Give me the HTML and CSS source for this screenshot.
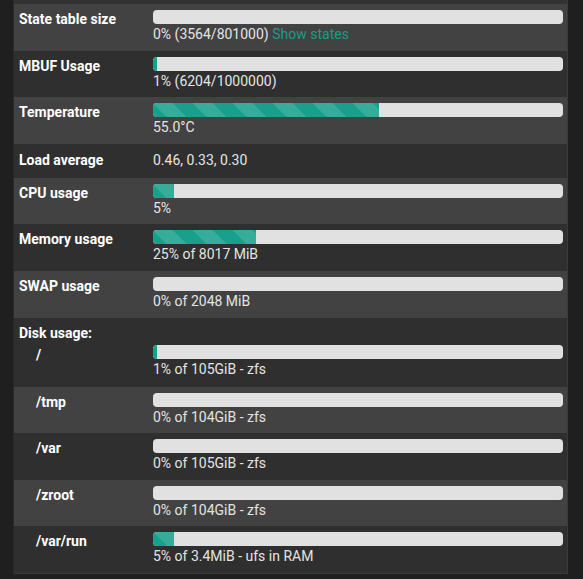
FILE: index.html
```html
<!DOCTYPE html>
<html>
<head>
<meta charset="utf-8">
<link rel="stylesheet" href="styles.css">
</head>
<body>
<div class="panel">
  <div class="panel-top"></div>
  <table class="sysinfo">
    <tbody>
      <tr class="light">
        <th>State table size</th>
        <td>
          <div class="progress"><div class="bar" style="width:0%"></div></div>
          <span class="val">0% (3564/801000) <a class="link" href="#">Show states</a></span>
        </td>
      </tr>
      <tr class="dark">
        <th>MBUF Usage</th>
        <td>
          <div class="progress"><div class="bar" style="width:1%"></div></div>
          <span class="val">1% (6204/1000000)</span>
        </td>
      </tr>
      <tr class="light">
        <th>Temperature</th>
        <td>
          <div class="progress"><div class="bar striped" style="width:55%"></div></div>
          <span class="val">55.0°C</span>
        </td>
      </tr>
      <tr class="dark single">
        <th>Load average</th>
        <td><span class="val">0.46, 0.33, 0.30</span></td>
      </tr>
      <tr class="light">
        <th>CPU usage</th>
        <td>
          <div class="progress"><div class="bar striped" style="width:5%"></div></div>
          <span class="val">5%</span>
        </td>
      </tr>
      <tr class="dark">
        <th>Memory usage</th>
        <td>
          <div class="progress"><div class="bar striped" style="width:25%"></div></div>
          <span class="val">25% of 8017 MiB</span>
        </td>
      </tr>
      <tr class="light">
        <th>SWAP usage</th>
        <td>
          <div class="progress"><div class="bar" style="width:0%"></div></div>
          <span class="val">0% of 2048 MiB</span>
        </td>
      </tr>
      <tr class="dark disk-head">
        <th>
          <div class="disk-title">Disk usage:</div>
          <div class="indent">/</div>
        </th>
        <td>
          <div class="spacer"></div>
          <div class="progress"><div class="bar" style="width:1%"></div></div>
          <span class="val">1% of 105GiB - zfs</span>
        </td>
      </tr>
      <tr class="light">
        <th><span class="indent">/tmp</span></th>
        <td>
          <div class="progress"><div class="bar" style="width:0%"></div></div>
          <span class="val">0% of 104GiB - zfs</span>
        </td>
      </tr>
      <tr class="dark">
        <th><span class="indent">/var</span></th>
        <td>
          <div class="progress"><div class="bar" style="width:0%"></div></div>
          <span class="val">0% of 105GiB - zfs</span>
        </td>
      </tr>
      <tr class="light">
        <th><span class="indent">/zroot</span></th>
        <td>
          <div class="progress"><div class="bar" style="width:0%"></div></div>
          <span class="val">0% of 104GiB - zfs</span>
        </td>
      </tr>
      <tr class="dark">
        <th><span class="indent">/var/run</span></th>
        <td>
          <div class="progress"><div class="bar striped" style="width:5%"></div></div>
          <span class="val">5% of 3.4MiB - ufs in RAM</span>
        </td>
      </tr>
    </tbody>
  </table>
</div>
</body>
</html>
```

FILE: styles.css
```css
html, body {
  margin: 0;
  padding: 0;
  background: #1f1f1f;
}

body {
  font-family: Roboto, "Liberation Sans", sans-serif;
  font-size: 14px;
  line-height: 20px;
  color: #e4e4e4;
}

.panel {
  margin-left: 13px;
  width: 555px;
  border-left: 1px solid #2a2a2a;
  border-right: 1px solid #3a3a3a;
  border-bottom: 1px solid #3a3a3a;
  box-sizing: border-box;
}

.panel-top {
  height: 4px;
  background: #323232;
}

.sysinfo {
  width: 100%;
  border-collapse: collapse;
  border-spacing: 0;
}

.sysinfo tr.light {
  background: #424242;
}

.sysinfo tr.dark {
  background: #2f2f2f;
}

.sysinfo th,
.sysinfo td {
  padding: 6px 5px 6.6px 5px;
  vertical-align: top;
  text-align: left;
}

.sysinfo td {
  padding-left: 5px;
  padding-right: 4px;
}

.sysinfo th {
  width: 124px;
  color: #ffffff;
  font-weight: 700;
  padding-top: 5px;
}

.sysinfo tr.single th,
.sysinfo tr.single td {
  padding-top: 6.5px;
  padding-bottom: 7.5px;
}

.sysinfo tr.disk-head th,
.sysinfo tr.disk-head td {
  padding-bottom: 8px;
}

.sysinfo tr.disk-head td {
  padding-top: 5px;
}

.disk-title {
  height: 22px;
}

.spacer {
  height: 22px;
}

.indent {
  display: block;
  padding-left: 17px;
}

.progress {
  height: 14px;
  background: #e1e1e1;
  border-radius: 4px;
  overflow: hidden;
}

.bar {
  height: 100%;
  background-color: #18a08c;
}

.bar.striped {
  background-image: linear-gradient(45deg,
    rgba(255, 255, 255, 0.13) 25%, transparent 25%,
    transparent 50%, rgba(255, 255, 255, 0.13) 50%,
    rgba(255, 255, 255, 0.13) 75%, transparent 75%, transparent);
  background-size: 40px 40px;
}

.val {
  display: block;
  white-space: nowrap;
}

.link {
  color: #1b9c89;
  text-decoration: none;
}
```
